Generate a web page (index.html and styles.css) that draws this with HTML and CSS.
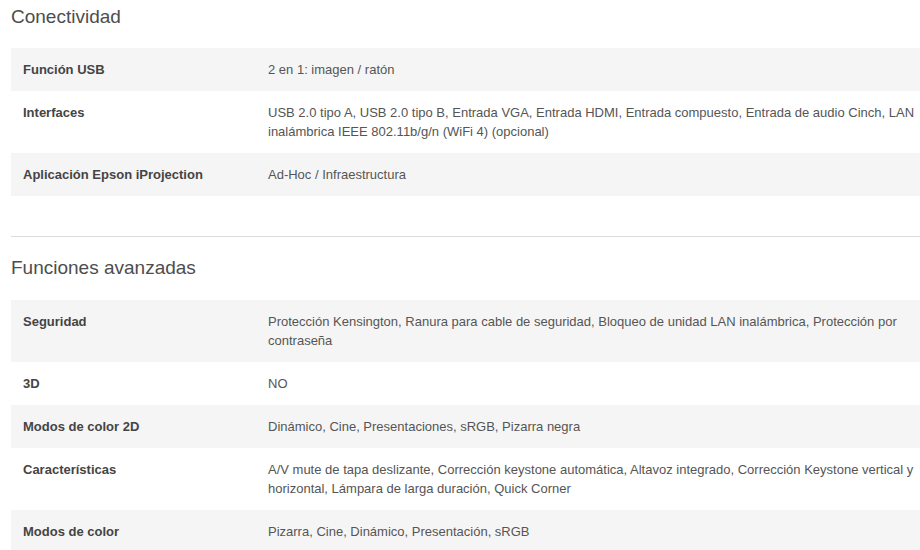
FILE: index.html
```html
<!DOCTYPE html>
<html lang="es">
<head>
<meta charset="utf-8">
<title>Especificaciones</title>
<link rel="stylesheet" href="styles.css">
</head>
<body>
<div class="page">
  <section class="spec-section">
    <h2 class="spec-title">Conectividad</h2>
    <table class="spec-table">
      <tr><th>Función USB</th><td>2 en 1: imagen / ratón</td></tr>
      <tr><th>Interfaces</th><td>USB 2.0 tipo A, USB 2.0 tipo B, Entrada VGA, Entrada HDMI, Entrada compuesto, Entrada de audio Cinch, LAN inalámbrica IEEE 802.11b/g/n (WiFi 4) (opcional)</td></tr>
      <tr><th>Aplicación Epson iProjection</th><td>Ad-Hoc / Infraestructura</td></tr>
    </table>
  </section>
  <section class="spec-section second">
    <h2 class="spec-title">Funciones avanzadas</h2>
    <table class="spec-table">
      <tr><th>Seguridad</th><td>Protección Kensington, Ranura para cable de seguridad, Bloqueo de unidad LAN inalámbrica, Protección por contraseña</td></tr>
      <tr><th>3D</th><td>NO</td></tr>
      <tr><th>Modos de color 2D</th><td>Dinámico, Cine, Presentaciones, sRGB, Pizarra negra</td></tr>
      <tr><th>Características</th><td>A/V mute de tapa deslizante, Corrección keystone automática, Altavoz integrado, Corrección Keystone vertical y horizontal, Lámpara de larga duración, Quick Corner</td></tr>
      <tr><th>Modos de color</th><td>Pizarra, Cine, Dinámico, Presentación, sRGB</td></tr>
    </table>
  </section>
</div>
</body>
</html>
```
FILE: styles.css
```css
html, body {
  margin: 0;
  padding: 0;
  background: #fff;
}
body {
  font-family: "Liberation Sans", Arial, sans-serif;
  color: #555;
  overflow: hidden;
}
.page {
  padding-left: 11px;
}
.spec-section {
  padding-bottom: 40px;
}
.spec-section.second {
  border-top: 1px solid #dcdcdc;
  padding-top: 20px;
}
.spec-title {
  margin: 6px 0 20px;
  font-size: 19px;
  line-height: 22px;
  font-weight: normal;
  color: #4d4d4d;
}
.spec-section.second .spec-title {
  margin: 0 0 21px;
}
.spec-table {
  width: 100%;
  border-collapse: collapse;
  font-size: 13px;
  line-height: 19px;
}
.spec-table tr:nth-child(odd) {
  background: #f5f5f5;
}
.spec-table th {
  width: 245px;
  padding: 12px 0 12px 12px;
  text-align: left;
  vertical-align: top;
  font-weight: bold;
  color: #444;
}
.spec-table td {
  padding: 12px 2px 12px 0;
  vertical-align: top;
  color: #555;
}
```
